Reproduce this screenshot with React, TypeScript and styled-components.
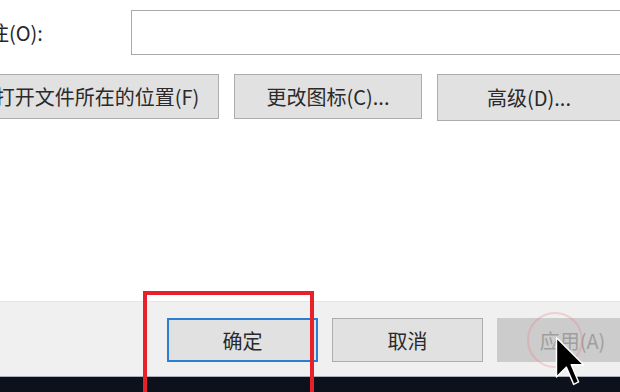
import React from "react"
import styled, { createGlobalStyle } from "styled-components"

const GlobalStyle = createGlobalStyle`
  html, body {
    margin: 0;
    padding: 0;
    background: #ffffff;
    overflow: hidden;
  }
  body {
    font-family: "Noto Sans CJK SC", "Noto Sans", "Liberation Sans", sans-serif;
    color: #262626;
  }
`

const Screen = styled.div`
  position: relative;
  width: 620px;
  height: 392px;
  overflow: hidden;
  display: flex;
  flex-direction: column;
  background: #ffffff;
`

const Body = styled.div`
  flex: 1;
  display: flex;
  flex-direction: column;
  gap: 19px;
  padding-top: 10px;
`

const FieldRow = styled.div`
  display: flex;
  align-items: center;
  margin-left: -31px;
`

const Label = styled.label`
  flex: none;
  width: 162px;
  font-size: 20px;
  line-height: 1;
  white-space: nowrap;
`

const Input = styled.div`
  flex: none;
  width: 520px;
  height: 45px;
  box-sizing: border-box;
  border: 1px solid #a9a9a9;
  background: #ffffff;
`

const ButtonRow = styled.div<{ $gap: number; $offset?: number }>`
  display: flex;
  gap: ${(p) => p.$gap}px;
  margin-left: ${(p) => p.$offset ?? 0}px;
`

const Button = styled.div<{ $w: number; $h?: number; $primary?: boolean; $disabled?: boolean }>`
  flex: none;
  width: ${(p) => p.$w}px;
  height: ${(p) => p.$h ?? 45}px;
  box-sizing: border-box;
  display: flex;
  align-items: center;
  justify-content: center;
  font-size: 20px;
  white-space: nowrap;
  background: ${(p) => (p.$disabled ? "#cccccc" : "#e1e1e1")};
  color: ${(p) => (p.$disabled ? "#9f9f9f" : "#2a2a2a")};
  border: ${(p) =>
    p.$primary ? "2px solid #2a7fd4" : p.$disabled ? "1px solid #cccccc" : "1px solid #adadad"};
`

const Footer = styled.div`
  height: 75px;
  box-sizing: border-box;
  background: #f0f0f0;
  border-top: 1px solid #e6e6e6;
  padding: 16px 0 0 167px;
`

const Taskbar = styled.div`
  height: 15px;
  background: #0d111b;
  border-top: 1px solid #aab0bc;
`

const Highlight = styled.div`
  position: absolute;
  left: 143px;
  top: 291px;
  width: 171px;
  height: 120px;
  border: 4px solid #e8202a;
  box-sizing: border-box;
  pointer-events: none;
`

const ClickRing = styled.div`
  position: absolute;
  left: 527px;
  top: 312px;
  width: 56px;
  height: 56px;
  border-radius: 50%;
  border: 2px solid rgba(236, 120, 132, 0.28);
  box-sizing: border-box;
`

const Cursor = styled.svg`
  position: absolute;
  left: 554px;
  top: 335px;
`

const App = () => (
  <>
    <GlobalStyle />
    <Screen>
      <Body>
        <FieldRow>
          <Label>备注(O):</Label>
          <Input />
        </FieldRow>
        <ButtonRow $gap={15} $offset={-25}>
          <Button $w={244}>打开文件所在的位置(F)</Button>
          <Button $w={188}>更改图标(C)...</Button>
          <Button $w={184} $h={47}>高级(D)...</Button>
        </ButtonRow>
      </Body>
      <Footer>
        <ButtonRow $gap={14}>
          <Button $w={151} $h={44} $primary>确定</Button>
          <Button $w={151} $h={44}>取消</Button>
          <Button $w={151} $h={44} $disabled>应用(A)</Button>
        </ButtonRow>
      </Footer>
      <Taskbar />
      <Highlight />
      <ClickRing />
      <Cursor width="32" height="52" viewBox="0 0 13 21">
        <path
          d="M1 1 L1 17 L5 13 L8 20 L10 19 L7 12 L12 12 Z"
          fill="#000000"
          stroke="#ffffff"
          strokeWidth="0.6"
          strokeLinejoin="round"
        />
      </Cursor>
    </Screen>
  </>
)

export default App
